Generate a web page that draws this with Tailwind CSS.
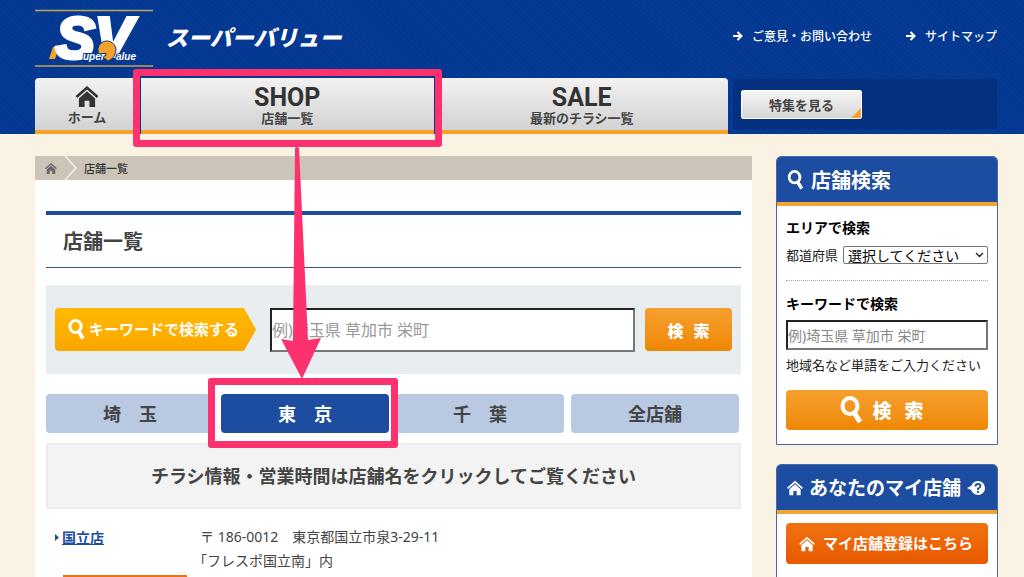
<!DOCTYPE html>
<html lang="ja">
<head>
<meta charset="utf-8">
<meta name="viewport" content="width=device-width, initial-scale=1">
<title>店舗一覧 | スーパーバリュー</title>
<script src="https://cdn.jsdelivr.net/npm/@tailwindcss/browser@4"></script>
</head>
<body class="relative min-h-screen overflow-x-hidden bg-[#faf3e3] font-['Noto_Sans_CJK_JP',sans-serif] text-[#444]">

<svg class="hidden" aria-hidden="true">
  <symbol id="house" viewBox="0 0 24 22">
    <path d="M12 0 L24 10.500 L22.200 12.500 L12 3.600 L1.800 12.500 L0 10.500 Z"/>
    <path d="M12 5.500 L20.500 13 V22 H14.500 V15.500 H9.500 V22 H3.500 V13 Z"/>
  </symbol>
  <symbol id="lens" viewBox="0 0 24 28">
    <ellipse cx="10" cy="10" rx="7.500" ry="8" fill="none" stroke="currentColor" stroke-width="4"/>
    <path d="M14.500 17 L20 26" stroke="currentColor" stroke-width="5"/>
  </symbol>
  <symbol id="arrow" viewBox="0 0 10 10">
    <path d="M0 5 H8 M4.500 1 L8.500 5 L4.500 9" fill="none" stroke="currentColor" stroke-width="2"/>
  </symbol>
</svg>

<header class="bg-[#053a96] bg-[repeating-linear-gradient(45deg,transparent_0_2px,#0000000d_2px_4px)] pl-[35px] pr-[27px]">
  <div class="flex h-[78px] items-start">
    <a href="#" class="flex items-start text-white" aria-label="スーパーバリュー">
      <svg class="mt-[9px] h-[60px] w-[118px] overflow-visible" viewBox="0 0 118 60" font-family="Liberation Sans" font-weight="bold" font-style="italic" fill="#fff">
        <path d="M0 1.500 H118 M0 57 H118" stroke="#c5a257" stroke-width="1.500"/>
        <path d="M18 38 H24 L20 50 H14 Z" fill="#f5a12b"/>
        <text x="21" y="49" font-size="58" stroke="#fff" stroke-width="4">S</text>
        <text x="60" y="47" font-size="56" stroke="#fff" stroke-width="4">V</text>
        <path d="M63 42 A9 9 0 1 1 80 45 Q78 51 72 52 L71 50 Q63 49 63 42 Z" fill="#f5a12b" stroke="#053a96" stroke-width="1"/>
        <g font-size="10" stroke="#053a96" stroke-width="2" paint-order="stroke">
          <text x="48" y="51">uper</text>
          <text x="81" y="51">alue</text>
        </g>
      </svg>
      <span class="ml-[13px] mt-[20px] text-[22px] leading-[32px] font-black italic">スーパーバリュー</span>
    </a>
    <div class="ml-auto mt-[27px] flex gap-[34px] text-[12px] leading-[18px] font-medium text-white">
      <a href="#" class="flex items-center gap-[9px]"><svg class="size-[10px]"><use href="#arrow"/></svg>ご意見・お問い合わせ</a>
      <a href="#" class="flex items-center gap-[9px]"><svg class="size-[10px]"><use href="#arrow"/></svg>サイトマップ</a>
    </div>
  </div>
  <div class="flex h-14">
    <nav class="flex flex-1 gap-[2px] overflow-hidden rounded-t text-center text-[13px] leading-[16px] font-bold">
      <a href="#" class="flex w-[104px] flex-col items-center border-b-4 border-[#f5a12b] bg-linear-to-b from-[#f2f2f2] to-[#d2d2d2] pt-2"><svg class="mb-[2px] h-[21px] w-6 fill-[#333]"><use href="#house"/></svg>ホーム</a>
      <a href="#" class="flex-1 border-b-4 border-[#f5a12b] bg-linear-to-b from-[#f2f2f2] to-[#d2d2d2] pt-[7px]"><span class="block font-['Liberation_Sans_Narrow','Roboto'] text-[25px] leading-[25px] text-[#333]">SHOP</span>店舗一覧</a>
      <a href="#" class="flex-1 border-b-4 border-[#f5a12b] bg-linear-to-b from-[#f2f2f2] to-[#d2d2d2] pt-[7px]"><span class="block font-['Liberation_Sans_Narrow','Roboto'] text-[25px] leading-[25px] text-[#333]">SALE</span>最新のチラシ一覧</a>
    </nav>
    <div class="ml-[5px] mt-px h-[50px] w-[264px] bg-[#04307d] pl-2 pt-[11px]">
      <a href="#" class="relative block h-[29px] w-[121px] overflow-hidden rounded-xs border border-white bg-linear-to-b from-[#f5f5f5] to-[#d6d6d6] text-center text-[13px] leading-[28px] font-bold">特集を見る<span class="absolute right-0 bottom-0 size-[10px] bg-[#f5a12b] [clip-path:polygon(100%_0,100%_100%,0_100%)]"></span></a>
    </div>
  </div>
</header>

<div class="flex items-start gap-6 pt-[22px] pr-[26px] pl-[35px]">
  <main class="min-w-0 flex-1 bg-white">
    <nav class="flex h-6 items-center bg-[#cac5b8] text-[11px] font-medium text-[#333]">
      <a href="#" aria-label="ホーム" class="ml-[10px]"><svg class="h-[11px] w-3 fill-[#666]"><use href="#house"/></svg></a>
      <svg class="ml-[7px] h-6 w-[14px]" viewBox="0 0 14 24" fill="none" stroke="#f5f1e6" stroke-width="1.500"><path d="M1 0 L12 12 L1 24"/></svg>
      <span class="ml-[6px]">店舗一覧</span>
    </nav>
    <div class="px-[11px] pt-[31px]">
      <h1 class="border-t-4 border-b border-t-[#1d4da0] border-b-[#31598f] pt-[10px] pb-[11px] pl-[17px] text-[20px] leading-[31px] font-bold">店舗一覧</h1>
      <form class="mt-[17px] flex h-[89px] items-center bg-[#e8edf0] px-[9px]">
        <label for="kw" class="flex h-[43px] w-[201px] items-center gap-[3px] rounded-l bg-linear-to-b from-[#ffba00] to-[#fca500] pl-[13px] text-[15px] font-bold whitespace-nowrap text-white [clip-path:polygon(0_0,94%_0,100%_50%,94%_100%,0_100%)]"><svg class="h-[21px] w-[18px]"><use href="#lens"/></svg>キーワードで検索する</label>
        <input id="kw" type="text" placeholder="例)埼玉県 草加市 栄町" class="ml-[14px] h-[44px] min-w-0 flex-1 border-2 border-[#777] border-t-[#222] border-l-[#222] bg-white font-['Noto_Sans','Noto_Sans_CJK_JP',sans-serif] text-[16px] placeholder:text-[#999]">
        <button type="button" class="ml-[10px] h-[43px] w-[87px] rounded bg-linear-to-b from-[#f5a02c] to-[#ef8800] text-[16px] font-black text-white"><span class="mr-[10px]">検</span>索</button>
      </form>
      <div class="mt-[20px] mr-[2px] grid grid-cols-4 gap-[7px] text-[18px] font-bold">
        <button type="button" class="h-[39px] rounded bg-[#b9c9e2]">埼　玉</button>
        <button type="button" class="h-[39px] rounded bg-[#1d4da0] text-white">東　京</button>
        <button type="button" class="h-[39px] rounded bg-[#b9c9e2]">千　葉</button>
        <button type="button" class="h-[39px] rounded bg-[#b9c9e2]">全店舗</button>
      </div>
      <p class="mt-[10px] flex h-[66px] items-center justify-center border-2 border-[#ebebeb] bg-[#f3f3f3] pb-[2px] text-[18px] font-bold">チラシ情報・営業時間は店舗名をクリックしてご覧ください</p>
      <div class="mt-4 flex pl-[9px] text-[14px] leading-6">
        <div class="w-[145px]">
          <div class="flex items-center gap-[3px] font-bold text-[#1d4da0]"><svg class="h-[7px] w-1 fill-[#1d4da0]" viewBox="0 0 4 7"><path d="M0 0 L4 3.500 L0 7 Z"/></svg><a href="#" class="underline">国立店</a></div>
          <a href="#" aria-label="国立店のチラシ" class="mt-[26px] ml-2 block h-6 w-[124px] bg-linear-to-b from-[#f0720f] to-[#ea5a00]"></a>
        </div>
        <address class="font-['Noto_Sans','Noto_Sans_CJK_JP',sans-serif] not-italic">〒 186-0012　東京都国立市泉3-29-11<br><span class="-ml-[7px]">「フレスポ国立南」内</span></address>
      </div>
    </div>
  </main>

  <aside class="w-[222px] text-[13px] text-[#222]">
    <section class="overflow-hidden rounded-t-[5px] border border-[#4a67a5] bg-white">
      <h2 class="flex h-[49px] items-center gap-[6px] border-b-4 border-[#efa436] bg-[#1d4da0] pl-[10px] text-[20px] font-bold text-white"><svg class="h-5 w-[18px]"><use href="#lens"/></svg>店舗検索</h2>
      <form class="px-[9px] pt-[10px] pb-[14px]">
        <h3 class="text-[14px] leading-[22px] font-bold text-black">エリアで検索</h3>
        <div class="mt-[8px] flex h-[18px] items-center">
          <label for="pref" class="mr-[5px] whitespace-nowrap">都道府県</label>
          <div class="relative flex-1">
            <select id="pref" class="block h-[18px] w-full appearance-none rounded-xs border border-[#777] bg-white pl-1 text-[14px] leading-[16px] text-black"><option>選択してください</option></select>
            <svg class="pointer-events-none absolute top-[6px] right-1 h-[6px] w-[9px]" viewBox="0 0 9 6" fill="none" stroke="#222" stroke-width="1.300"><path d="M1 1 L4.500 4.500 L8 1"/></svg>
          </div>
        </div>
        <label for="kw2" class="mt-[16px] block border-t border-dotted border-[#aaa] pt-[11px] text-[14px] leading-[22px] font-bold text-black">キーワードで検索</label>
        <input id="kw2" type="text" placeholder="例)埼玉県 草加市 栄町" class="mt-[6px] block h-[30px] w-full border-2 border-[#777] border-t-[#222] border-l-[#222] bg-white font-['Noto_Sans','Noto_Sans_CJK_JP',sans-serif] text-[14px] placeholder:text-[#888]">
        <p class="mt-[5px] leading-5 whitespace-nowrap">地域名など単語をご入力ください</p>
        <button type="button" class="mt-[15px] flex h-[40px] w-full items-center justify-center gap-2 rounded bg-linear-to-b from-[#f5a02c] to-[#ef8800] pr-[10px] text-[19px] font-black text-white"><svg class="h-[28px] w-6"><use href="#lens"/></svg><span><span class="mr-[13px]">検</span>索</span></button>
      </form>
    </section>
    <section class="mt-[19px] overflow-hidden rounded-t-[5px] border border-[#4a67a5] bg-white">
      <h2 class="flex h-[49px] items-center gap-[6px] border-b-4 border-[#efa436] bg-[#1d4da0] pl-[10px] text-[19px] font-bold whitespace-nowrap text-white"><svg class="h-4 w-4 fill-white"><use href="#house"/></svg>あなたのマイ店舗
        <svg class="h-[14px] w-[18px]" viewBox="0 0 18 14" role="img" aria-label="ヘルプ"><path d="M0 7 L6 4 V10 Z" fill="#fff"/><circle cx="11" cy="7" r="7" fill="#fff"/><path d="M8.500 5.500 Q8.500 3 11 3 Q13.500 3 13.500 5.200 Q13.500 6.500 11 7.500 V9 M11 10 V12" fill="none" stroke="#1d4da0" stroke-width="1.800"/></svg>
      </h2>
      <div class="px-[9px] pt-[9px] pb-8">
        <a href="#" class="flex h-[41px] items-center justify-center gap-2 rounded bg-linear-to-b from-[#f0720f] to-[#e85800] pr-[2px] text-[15px] font-bold whitespace-nowrap text-white"><svg class="h-4 w-4 fill-white"><use href="#house"/></svg>マイ店舗登録はこちら</a>
      </div>
    </section>
  </aside>
</div>

<!-- Guide marks laid over the page -->
<div class="pointer-events-none absolute top-[69px] left-[133px] h-[78px] w-[309px] rounded-[3px] border-7 border-[#fd316e]"></div>
<div class="pointer-events-none absolute top-[378px] left-[208px] h-[70px] w-[190px] rounded-[3px] border-7 border-[#fd316e]"></div>
<svg class="pointer-events-none absolute top-[146px] left-[280px] h-[234px] w-[42px]" viewBox="0 0 42 234" fill="#fd316e"><path d="M15 2 Q17 0 19 2 L28 194 L41 192 L22 233 L1 193 L13 195 Z"/></svg>
</body>
</html>
